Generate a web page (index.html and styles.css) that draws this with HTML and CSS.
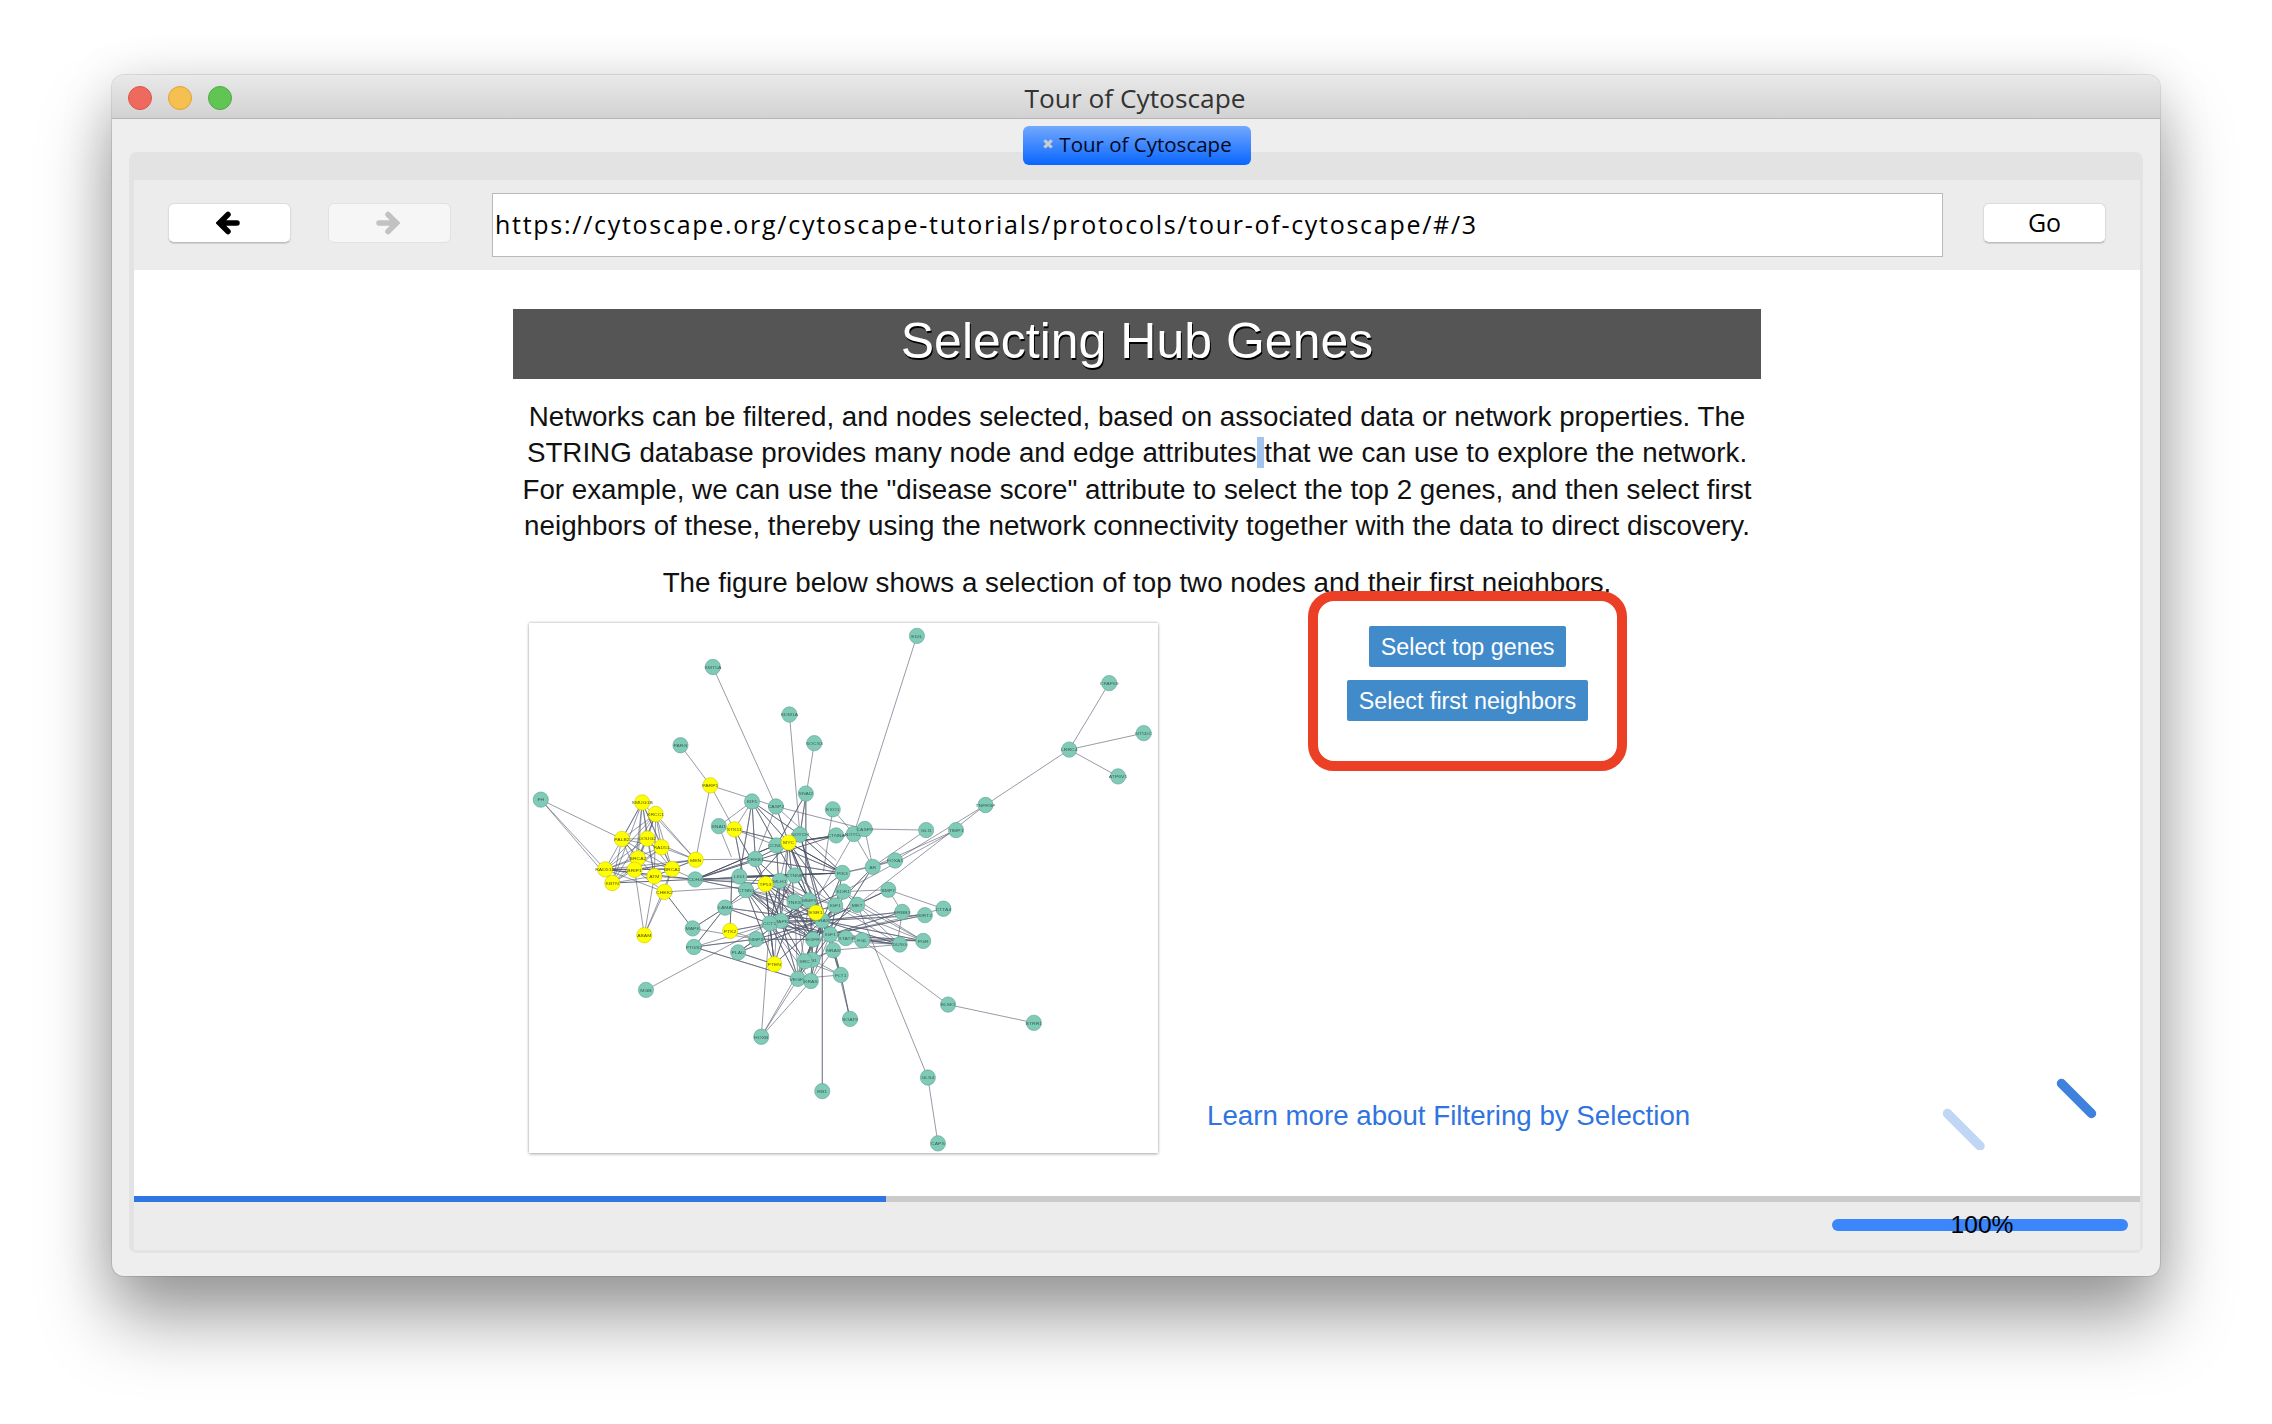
FILE: index.html
```html
<!DOCTYPE html>
<html lang="en">
<head>
<meta charset="utf-8">
<title>Tour of Cytoscape</title>
<link rel="stylesheet" href="styles.css">
</head>
<body>
<div class="window">
  <header class="titlebar">
    <span class="light red"></span><span class="light amber"></span><span class="light green"></span>
    <span class="title">Tour of Cytoscape</span>
  </header>
  <div class="pane">
    <div class="tab"><span class="tab-x">&#10006;</span>Tour of Cytoscape</div>
    <div class="toolbar">
      <button class="tool"><svg class="arrow" viewBox="0 0 24 24"><path d="M12 3.5 3.5 12l8.500 8.500M4 12h17"/></svg></button>
      <button class="tool off"><svg class="arrow" viewBox="0 0 24 24"><path d="M12 3.500 20.500 12 12 20.500M20 12H3"/></svg></button>
      <div class="url">https://cytoscape.org/cytoscape-tutorials/protocols/tour-of-cytoscape/#/3</div>
      <button class="tool go">Go</button>
    </div>
    <main class="content">
      <h1 class="heading">Selecting Hub Genes</h1>
      <p class="intro">Networks can be filtered, and nodes selected, based on associated data or network properties. The<br>STRING database provides many node and edge attributes<span class="sel"> </span>that we can use to explore the network.<br>For example, we can use the "disease score" attribute to select the top 2 genes, and then select first<br>neighbors of these, thereby using the network connectivity together with the data to direct discovery.</p>
      <p class="caption">The figure below shows a selection of top two nodes and their first neighbors.</p>
      <div class="row">
        <div class="figure">
          <svg class="graph" viewBox="45 36 1495 1482" preserveAspectRatio="none">
            <g class="edges">
              <polyline points="967,72 817,626"/>
              <polyline points="482,159 632,549"/>
              <polyline points="664,292 689,628"/>
              <polyline points="723,372 689,628"/>
              <polyline points="405,378 476,490 441,698"/>
              <polyline points="476,490 533,613 575,535"/>
              <polyline points="476,490 632,549 843,612"/>
              <polyline points="1424,204 1329,390 1506,344"/>
              <polyline points="1445,465 1329,390 1130,545 915,700 790,735"/>
              <polyline points="1060,615 862,718 989,615"/>
              <polyline points="1060,615 792,787"/>
              <polyline points="1130,545 825,824"/>
              <polyline points="73,530 266,640"/>
              <polyline points="73,530 226,725"/>
              <polyline points="73,530 243,763"/>
              <polyline points="323,1062 617,876"/>
              <polyline points="1245,1154 1041,1103 837,923"/>
              <polyline points="1017,1491 993,1307 825,824"/>
              <polyline points="597,1193 617,876"/>
              <polyline points="597,1193 684,1031"/>
              <polyline points="597,1193 715,1037"/>
              <polyline points="597,1193 700,982"/>
              <polyline points="808,1143 768,951"/>
              <polyline points="319,909 296,726"/>
              <polyline points="319,909 343,744"/>
              <polyline points="319,909 367,788"/>
              <polyline points="319,909 385,724"/>
              <polyline class="thick" points="367,788 434,890"/>
              <polyline points="314,538 266,640 346,570 326,639 314,538 360,663 346,570 304,694 314,538 226,725 346,570 296,726 314,538 343,744 346,570 385,724 314,538 243,763 346,570 441,698 314,538"/>
              <polyline points="266,640 326,639 226,725 360,663 266,640 304,694 226,725 296,726 266,640 343,744 226,725 385,724 266,640 243,763 226,725 441,698"/>
              <polyline points="296,726 326,639 385,724 304,694 243,763 360,663 296,726 441,698 385,724 343,744 243,763 296,726 385,724 226,725 367,788 296,726 441,698 343,744 326,639 441,698 360,663 385,724"/>
              <polyline class="thick" points="226,725 440,753 243,763"/>
              <polyline points="343,744 440,753 385,724 367,788 545,775"/>
              <polyline points="441,698 583,696"/>
              <polyline class="thick" points="440,753 689,628 440,753 775,630"/>
              <polyline points="440,753 583,696 440,753 790,735 440,753 607,766 440,753 561,783 440,753 676,742 440,753 641,757"/>
              <polyline points="742,868 617,876 742,868 644,869 742,868 561,783 742,868 607,766 742,868 676,742 742,868 790,735 742,868 862,718 742,868 689,628 742,868 662,650 742,868 583,696 742,868 511,832 742,868 585,920 742,868 542,957 742,868 628,990 742,868 684,1031 742,868 715,1037 742,868 786,1020 742,868 926,935 742,868 982,925 742,868 932,844 742,868 899,782 742,868 986,853 742,868 825,824"/>
              <polyline class="thick" points="742,868 742,1345"/>
              <polyline points="720,921 561,783 720,921 607,766 720,921 641,757 720,921 676,816 720,921 711,812 720,921 773,826 720,921 825,824 720,921 792,787 720,921 700,982 720,921 684,1031 720,921 715,1037 720,921 617,876 720,921 644,869 720,921 585,920 720,921 926,935"/>
              <polyline points="761,907 662,650 761,907 633,658 761,907 689,628 761,907 790,735 761,907 862,718 761,907 617,876 761,907 986,853 761,907 932,844 761,907 982,925 761,907 926,935 761,907 786,1020 761,907 684,1031 761,907 1030,835"/>
              <polyline points="644,869 545,745 644,869 561,783 644,869 607,766 644,869 583,696 644,869 633,658 644,869 662,650 644,869 711,812 644,869 773,826 644,869 792,787 644,869 798,917 644,869 684,1031 644,869 700,982"/>
              <polyline points="617,876 561,783 617,876 607,766 617,876 641,757 617,876 676,742 617,876 711,812 617,876 628,990 617,876 700,982 617,876 684,1031 617,876 715,1037"/>
              <polyline class="thick" points="662,650 790,735 662,650 775,630 662,650 817,626"/>
              <polyline points="662,650 583,696 662,650 711,812 662,650 676,816 662,650 773,826 662,650 561,783 662,650 641,757"/>
              <polyline points="790,735 689,628 790,735 633,658 790,735 583,696 790,735 545,745 790,735 711,812 790,735 862,718"/>
              <polyline class="thick" points="545,745 790,735"/>
              <polyline points="575,535 583,696 575,535 633,658 575,535 689,628 575,535 662,650 575,535 545,745 575,535 496,604"/>
              <polyline points="632,549 662,650 632,549 583,696"/>
              <polyline points="703,513 703,760 703,513 633,658 703,513 689,628"/>
              <polyline points="767,557 745,730"/>
              <polyline points="767,557 817,626 843,612 862,718 817,626 733,800"/>
              <polyline points="843,612 989,615"/>
              <polyline points="632,549 775,700"/>
              <polyline points="533,613 662,650 533,613 607,766 533,613 561,783 533,613 633,658"/>
              <polyline points="496,604 526,690"/>
              <polyline points="899,782 1030,835"/>
              <polyline points="899,782 825,824 792,787 899,782 932,844 920,935"/>
              <polyline points="862,718 915,700"/>
              <polyline points="437,942 511,832 437,942 684,1031 437,942 585,920 437,942 644,869"/>
              <polyline points="434,890 511,832 434,890 585,920"/>
              <polyline points="511,832 561,783 511,832 617,876 511,832 607,766"/>
              <polyline points="542,957 644,869 542,957 628,990 542,957 585,920"/>
              <polyline points="523,897 527,745 523,897 617,876 523,897 585,920"/>
              <polyline points="786,1020 808,1143 786,1020 718,978 768,951"/>
              <polyline points="768,951 926,935 798,917 982,925 837,923 926,935"/>
              <polyline points="825,824 982,925 773,826 926,935 792,787 982,925"/>
              <polyline points="684,1031 786,1020 700,982 768,951 715,1037 761,907"/>
              <polyline points="700,982 676,816 684,1031 711,812 718,978 773,826 700,982 644,869"/>
              <polyline points="628,990 676,816 628,990 607,766 628,990 561,783 628,990 641,757"/>
              <polyline points="607,766 711,812 561,783 676,816 641,757 711,812 676,742 773,826 607,766 798,917 561,783 761,907 641,757 773,826"/>
            </g>
            <g class="nodes">
              <ellipse cx="967" cy="72"/><text x="967" y="77">EDIL</text>
              <ellipse cx="482" cy="159"/><text x="482" y="164">KMT5A</text>
              <ellipse cx="664" cy="292"/><text x="664" y="297">KDM1A</text>
              <ellipse cx="723" cy="372"/><text x="723" y="377">SOCS3</text>
              <ellipse cx="405" cy="378"/><text x="405" y="383">PARG</text>
              <ellipse cx="1424" cy="204"/><text x="1424" y="209">CFAP69</text>
              <ellipse cx="1506" cy="344"/><text x="1506" y="349">NT5DC</text>
              <ellipse cx="1329" cy="390"/><text x="1329" y="395">LRRC4</text>
              <ellipse cx="1445" cy="465"/><text x="1445" y="470">ATP6V1</text>
              <ellipse cx="1130" cy="545"/><text x="1130" y="550">TNFRSF</text>
              <ellipse cx="73" cy="530"/><text x="73" y="535">FH</text>
              <ellipse cx="703" cy="513"/><text x="703" y="518">SNAI2</text>
              <ellipse cx="575" cy="535"/><text x="575" y="540">KIF1</text>
              <ellipse cx="632" cy="549"/><text x="632" y="554">CASP2</text>
              <ellipse cx="496" cy="604"/><text x="496" y="609">SNAI1</text>
              <ellipse cx="767" cy="557"/><text x="767" y="562">EXO1</text>
              <ellipse cx="689" cy="628"/><text x="689" y="633">NOTCH</text>
              <ellipse cx="633" cy="658"/><text x="633" y="663">CCND1</text>
              <ellipse cx="775" cy="630"/><text x="775" y="635">CTNNA</text>
              <ellipse cx="817" cy="626"/><text x="817" y="631">NOTCH</text>
              <ellipse cx="843" cy="612"/><text x="843" y="617">CASP8</text>
              <ellipse cx="989" cy="615"/><text x="989" y="620">GLI1</text>
              <ellipse cx="1060" cy="615"/><text x="1060" y="620">TIMP1</text>
              <ellipse cx="915" cy="700"/><text x="915" y="705">FOXA1</text>
              <ellipse cx="862" cy="718"/><text x="862" y="723">AR</text>
              <ellipse cx="583" cy="696"/><text x="583" y="701">CREB1</text>
              <ellipse cx="440" cy="753"/><text x="440" y="758">CDH4</text>
              <ellipse cx="545" cy="745"/><text x="545" y="750">LIG1</text>
              <ellipse cx="641" cy="757"/><text x="641" y="762">MLH1</text>
              <ellipse cx="676" cy="742"/><text x="676" y="747">CTNNB</text>
              <ellipse cx="790" cy="735"/><text x="790" y="740">PIK3</text>
              <ellipse cx="561" cy="783"/><text x="561" y="788">CTNN1</text>
              <ellipse cx="792" cy="787"/><text x="792" y="792">KDR1</text>
              <ellipse cx="899" cy="782"/><text x="899" y="787">BMP7</text>
              <ellipse cx="1030" cy="835"/><text x="1030" y="840">CTTA4</text>
              <ellipse cx="932" cy="844"/><text x="932" y="849">ERBB3</text>
              <ellipse cx="986" cy="853"/><text x="986" y="858">SIRT2</text>
              <ellipse cx="825" cy="824"/><text x="825" y="829">MET</text>
              <ellipse cx="773" cy="826"/><text x="773" y="831">IGF1</text>
              <ellipse cx="711" cy="812"/><text x="711" y="817">MMP9</text>
              <ellipse cx="676" cy="816"/><text x="676" y="821">TNKS</text>
              <ellipse cx="511" cy="832"/><text x="511" y="837">LAMA</text>
              <ellipse cx="644" cy="869"/><text x="644" y="874">MAPK</text>
              <ellipse cx="617" cy="876"/><text x="617" y="881">CCT1</text>
              <ellipse cx="434" cy="890"/><text x="434" y="895">MAPK</text>
              <ellipse cx="585" cy="920"/><text x="585" y="925">NMP8</text>
              <ellipse cx="720" cy="921"/><text x="720" y="926">EGFR</text>
              <ellipse cx="761" cy="907"/><text x="761" y="912">IGF1</text>
              <ellipse cx="798" cy="917"/><text x="798" y="922">STAT3</text>
              <ellipse cx="837" cy="923"/><text x="837" y="928">FGL</text>
              <ellipse cx="926" cy="935"/><text x="926" y="940">DUSG</text>
              <ellipse cx="982" cy="925"/><text x="982" y="930">PGR</text>
              <ellipse cx="768" cy="951"/><text x="768" y="956">NRAS</text>
              <ellipse cx="437" cy="942"/><text x="437" y="947">PTGS2</text>
              <ellipse cx="542" cy="957"/><text x="542" y="962">PLAU</text>
              <ellipse cx="718" cy="978"/><text x="718" y="983">RB1</text>
              <ellipse cx="700" cy="982"/><text x="700" y="987">SRC</text>
              <ellipse cx="684" cy="1031"/><text x="684" y="1036">VEGFA</text>
              <ellipse cx="715" cy="1037"/><text x="715" y="1042">KRAS</text>
              <ellipse cx="786" cy="1020"/><text x="786" y="1025">FLT1</text>
              <ellipse cx="742" cy="868"/><text x="742" y="873">HRAS</text>
              <ellipse cx="323" cy="1062"/><text x="323" y="1067">MGB</text>
              <ellipse cx="808" cy="1143"/><text x="808" y="1148">SOAT8</text>
              <ellipse cx="1041" cy="1103"/><text x="1041" y="1108">ELMO</text>
              <ellipse cx="1245" cy="1154"/><text x="1245" y="1159">BTRR1</text>
              <ellipse cx="597" cy="1193"/><text x="597" y="1198">HOXB</text>
              <ellipse cx="742" cy="1345"/><text x="742" y="1350">RB1</text>
              <ellipse cx="993" cy="1307"/><text x="993" y="1312">GLS4</text>
              <ellipse cx="1017" cy="1491"/><text x="1017" y="1496">CAPS</text>
            </g>
            <g class="nodes picked">
              <ellipse cx="476" cy="490"/><text x="476" y="495">PARP1</text>
              <ellipse cx="314" cy="538"/><text x="314" y="543">SMUG1B</text>
              <ellipse cx="346" cy="570"/><text x="346" y="575">XRCC1</text>
              <ellipse cx="266" cy="640"/><text x="266" y="645">PALB2</text>
              <ellipse cx="326" cy="639"/><text x="326" y="644">DOUG2</text>
              <ellipse cx="360" cy="663"/><text x="360" y="668">RAD51</text>
              <ellipse cx="304" cy="694"/><text x="304" y="699">BRCA2</text>
              <ellipse cx="226" cy="725"/><text x="226" y="730">RAD51D</text>
              <ellipse cx="296" cy="726"/><text x="296" y="731">BRIP1</text>
              <ellipse cx="385" cy="724"/><text x="385" y="729">BRCA1</text>
              <ellipse cx="343" cy="744"/><text x="343" y="749">ATM</text>
              <ellipse cx="243" cy="763"/><text x="243" y="768">KBTN</text>
              <ellipse cx="367" cy="788"/><text x="367" y="793">CHEK2</text>
              <ellipse cx="441" cy="698"/><text x="441" y="703">MEN</text>
              <ellipse cx="319" cy="909"/><text x="319" y="914">ABAM</text>
              <ellipse cx="533" cy="613"/><text x="533" y="618">STK11</text>
              <ellipse cx="662" cy="650"/><text x="662" y="655">MYC</text>
              <ellipse cx="607" cy="766"/><text x="607" y="771">TP53</text>
              <ellipse cx="727" cy="846"/><text x="727" y="851">ESR1</text>
              <ellipse cx="523" cy="897"/><text x="523" y="902">PTK2</text>
              <ellipse cx="628" cy="990"/><text x="628" y="995">PTEN</text>
            </g>
          </svg>
        </div>
        <div class="side">
          <button class="action">Select top genes</button>
          <button class="action">Select first neighbors</button>
          <a class="more" href="#">Learn more about Filtering by Selection</a>
        </div>
      </div>
      <div class="callout"></div>
      <svg class="spinner" viewBox="0 0 160 75">
        <line class="dash" x1="121.500" y1="8.500" x2="151.500" y2="38.500"/>
        <line class="dash faint" x1="7.500" y1="38.500" x2="40" y2="71"/>
      </svg>
    </main>
    <div class="track"><div class="fill" style="width:37.49%"></div></div>
    <footer class="status">
      <div class="meter"><span class="meter-label">100%</span></div>
    </footer>
  </div>
</div>
</body>
</html>
```
FILE: styles.css
```css
* { box-sizing: border-box; }
html, body { margin: 0; height: 100%; background: #fff; }
body { padding: 75px 112px 0; font-family: "Liberation Sans", Arial, sans-serif; overflow: hidden; }

.window {
  width: 2048px;
  height: 1201px;
  background: #eee;
  border-radius: 12px;
  display: flex;
  flex-direction: column;
  box-shadow: 0 0 0 1px rgba(0,0,0,.1), 0 44px 72px rgba(0,0,0,.36), 0 8px 54px rgba(0,0,0,.14);
}

.titlebar {
  height: 44px;
  flex: none;
  display: flex;
  align-items: center;
  gap: 16px;
  padding: 2px 0 0 16px;
  position: relative;
  background: linear-gradient(#e9e9e9, #d2d2d2);
  border-bottom: 1px solid #b4b4b4;
  border-radius: 12px 12px 0 0;
}
.light { width: 24px; height: 24px; border-radius: 50%; border: 1px solid; }
.red { background: #ee6a5f; border-color: #d9564b; }
.amber { background: #f5c04f; border-color: #dea437; }
.green { background: #61c554; border-color: #4dab41; }
.title {
  position: absolute;
  left: 0;
  right: 0;
  top: 8px;
  padding-right: 2px;
  text-align: center;
  font: 26.300px/30px "Open Sans", "Liberation Sans", sans-serif;
  color: #333;
}

.pane {
  flex: 1;
  margin: 33px 17px 23px;
  padding: 28px 3px 3px 5px;
  background: #e3e3e3;
  border-radius: 8px;
  display: flex;
  flex-direction: column;
  position: relative;
}
.tab {
  position: absolute;
  top: -26px;
  left: 894px;
  width: 228px;
  height: 39px;
  padding-bottom: 3px;
  display: flex;
  align-items: center;
  justify-content: center;
  gap: 5px;
  border-radius: 6px;
  background: linear-gradient(#72a8fd, #0866ff);
  font: 20.500px/24px "Open Sans", "Liberation Sans", sans-serif;
  color: #02091c;
}
.tab-x { font-size: 14px; color: #c9ccd3; }

.toolbar {
  height: 90px;
  flex: none;
  display: flex;
  align-items: center;
  padding: 0 34px;
  background: #ececec;
}
.tool {
  width: 123px;
  height: 40px;
  flex: none;
  margin-bottom: 4px;
  padding: 0;
  display: flex;
  align-items: center;
  justify-content: center;
  background: #fff;
  border: 1px solid #dcdcdc;
  border-bottom-color: #bdbdbd;
  border-radius: 6px;
  box-shadow: 0 1px 1px rgba(0,0,0,.12);
  color: #000;
  font: 25px/1 "Open Sans", "Liberation Sans", sans-serif;
}
.tool.go { padding-bottom: 2px; }
.tool.off { margin-left: 37px; background: #f6f6f6; box-shadow: none; border-color: #e2e2e2; }
.arrow { width: 24px; height: 24px; margin-right: 3px; fill: none; stroke: #000; stroke-width: 5.500; stroke-linecap: round; stroke-linejoin: miter; }
.off .arrow { stroke: #c2c2c2; }
.url {
  flex: 1;
  height: 64px;
  margin: 0 40px 0 41px;
  padding: 0 2px 2px;
  display: flex;
  align-items: center;
  background: #fff;
  border: 1px solid #b9b9b9;
  font: 25px/1 "Open Sans", "Liberation Sans", sans-serif;
  letter-spacing: 1.720px;
  color: #000;
}

.content {
  flex: 1;
  min-height: 0;
  position: relative;
  background: #fff;
  padding-top: 39px;
}
.heading {
  width: 1248px;
  height: 70px;
  margin: 0 auto;
  background: #555;
  color: #fff;
  text-align: center;
  font-size: 50px;
  font-weight: 400;
  line-height: 64px;
  text-shadow: 1px 2px 0 #000;
}
.intro, .caption {
  margin: 0;
  text-align: center;
  font-size: 27.760px;
  line-height: 36.500px;
  color: #111;
}
.intro { margin-top: 19.800px; }
.caption { margin-top: 20px; }
.sel { background: #a3c4ee; }

.row {
  width: 1248px;
  margin: 22px auto 0;
  padding-left: 16px;
  display: flex;
}
.figure {
  width: 629px;
  height: 530px;
  flex: none;
  background: #fff;
  box-shadow: 0 1px 3px rgba(0,0,0,.35), 0 -1px 2px rgba(0,0,0,.12);
}
.graph { display: block; width: 100%; height: 100%; filter: blur(.35px); }
.edges polyline {
  fill: none;
  stroke: #50566a;
  stroke-width: .7px;
  stroke-opacity: .85;
  vector-effect: non-scaling-stroke;
}
.edges .thick { stroke-width: 1px; stroke: #484e60; }
.nodes ellipse {
  rx: 18px;
  ry: 21.500px;
  fill: #7fcbb7;
  stroke: #5c9f8e;
  stroke-width: .6px;
  vector-effect: non-scaling-stroke;
}
.nodes text { font: 12px "Liberation Sans", sans-serif; fill: #3d5f57; text-anchor: middle; }
.picked ellipse { fill: #ffff00; stroke: #c8c800; }
.picked text { fill: #55550a; }

.side {
  width: 619px;
  flex: none;
  display: flex;
  flex-direction: column;
  align-items: center;
  padding-top: 3px;
}
.action {
  height: 41px;
  padding: 2px 12px 0;
  border: 0;
  border-radius: 2px;
  background: #428bca;
  color: #fff;
  font: 23.300px/1 "Liberation Sans", sans-serif;
}
.action + .action { margin-top: 13px; }
.more {
  margin: auto 0 19px 49px;
  align-self: flex-start;
  font-size: 27.700px;
  line-height: 36px;
  color: #2f74e0;
  text-decoration: none;
}

.callout {
  position: absolute;
  left: 1174px;
  top: 321px;
  width: 319px;
  height: 180px;
  border: 10px solid #ec4026;
  border-radius: 26px;
}
.spinner { position: absolute; left: 1806px; top: 805px; width: 160px; height: 75px; }
.dash { stroke: #3f82de; stroke-width: 9.500; stroke-linecap: round; }
.dash.faint { stroke: #c0d6f5; }

.track { height: 6px; flex: none; background: #cbcbcb; }
.fill { height: 100%; background: #2e77e0; }
.status {
  height: 48px;
  flex: none;
  display: flex;
  justify-content: flex-end;
  align-items: center;
  padding: 0 12px 2px 0;
  background: #ececec;
}
.meter {
  width: 296px;
  height: 12px;
  position: relative;
  border-radius: 6px;
  background: #3b86fb;
}
.meter-label {
  position: absolute;
  left: 0;
  right: 0;
  top: -9px;
  padding-left: 4px;
  text-align: center;
  font: 24.600px/30px "Liberation Sans", sans-serif;
  color: #000;
}
```
